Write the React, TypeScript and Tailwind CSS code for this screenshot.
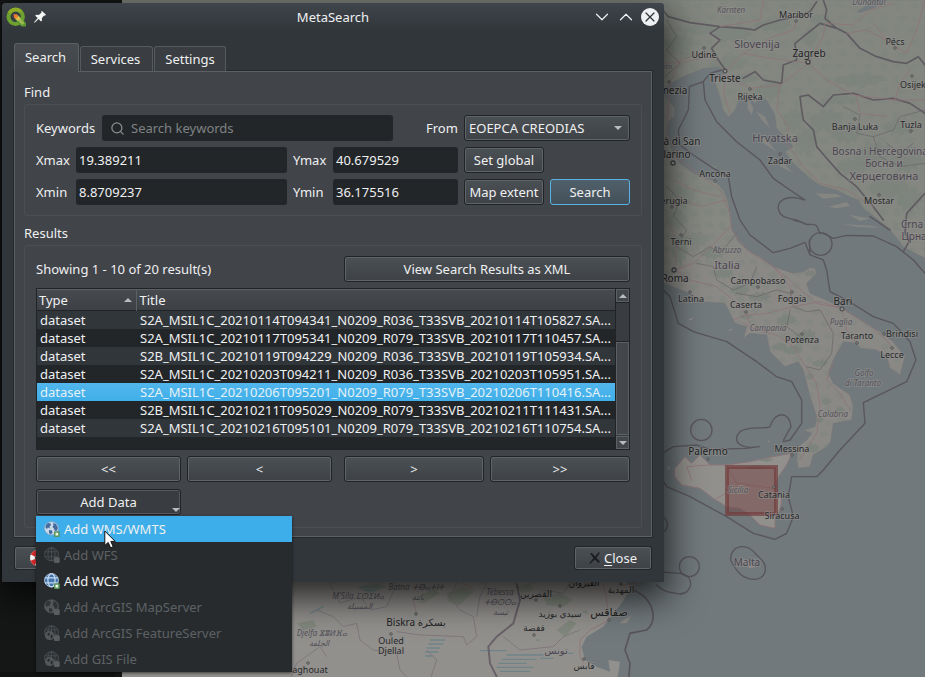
import React from "react";
import { ChevronDown, ChevronUp, Search, X } from "lucide-react";

const RAISED =
  "rounded-[3px] border border-[#202427] bg-linear-to-b from-[#4b5054] to-[#3e4246] text-[#eff0f1] shadow-[inset_0_0_0_1px_#5f6468]";
const FIELD =
  "h-[26px] w-full min-w-0 rounded-[3px] bg-[#232629] px-[3px] text-[#eff0f1] outline-none";

type Label = [string, number, number, number, ("region" | "country" | "city" | "big")?];

/* text, centre x, baseline y, size, kind */
const LABELS: Label[] = [
  ["Kärnten", 731, 13, 8, "region"],
  ["Dunántúl", 869, 5, 8, "region"],
  ["Maribor", 796, 18, 9, "city"],
  ["Slovenija", 757, 48, 11, "country"],
  ["Zagreb", 809, 57, 10, "big"],
  ["Pécs", 895, 45, 9, "city"],
  ["Udine", 704, 58, 9, "city"],
  ["eto", 667, 69, 7, "region"],
  ["Trieste", 725, 82, 10, "big"],
  ["Osijek", 913, 88, 9, "city"],
  ["nezia", 675, 94, 10, "big"],
  ["Rijeka", 750, 100, 9, "city"],
  ["Banja Luka", 855, 130, 9, "city"],
  ["Tuzla", 911, 128, 9, "city"],
  ["à di San", 682, 145, 10, "big"],
  ["larino", 677, 158, 10, "big"],
  ["Hrvatska", 775, 142, 11, "country"],
  ["Zadar", 780, 164, 9, "city"],
  ["Bosna i Hercegovina", 880, 155, 10, "country"],
  ["Босна и", 884, 167, 10, "country"],
  ["Херцеговина", 884, 180, 11, "country"],
  ["Ancona", 715, 177, 9, "city"],
  ["Mostar", 879, 204, 9, "city"],
  ["erugia", 674, 204, 9, "city"],
  ["Crna", 912, 228, 10, "country"],
  ["Црна", 914, 240, 10, "country"],
  ["Terni", 681, 245, 9, "city"],
  ["Abruzzo", 727, 253, 8, "region"],
  ["Italia", 727, 269, 11, "country"],
  ["Roma", 675, 282, 10, "big"],
  ["Campobasso", 758, 284, 9, "city"],
  ["Latina", 691, 302, 9, "city"],
  ["Foggia", 792, 302, 9, "city"],
  ["Bari", 843, 305, 10, "big"],
  ["Caserta", 746, 308, 9, "city"],
  ["Puglia", 841, 325, 8, "region"],
  ["Campania", 768, 331, 8, "region"],
  ["Potenza", 802, 343, 9, "city"],
  ["Taranto", 857, 339, 9, "city"],
  ["Brindisi", 902, 337, 9, "city"],
  ["Lecce", 892, 358, 9, "city"],
  ["Golfo", 864, 376, 8, "region"],
  ["di Taranto", 863, 386, 8, "region"],
  ["Calabria", 833, 417, 8, "region"],
  ["Messina", 792, 452, 9, "city"],
  ["Palermo", 708, 455, 10, "big"],
  ["Sicilia", 738, 493, 8, "region"],
  ["Catania", 774, 498, 9, "city"],
  ["Siracusa", 782, 519, 9, "city"],
  ["Malta", 747, 566, 10, "country"],
  ["M'Sila ⵎⵙⵉⵍⴰ", 358, 599, 8, "region"],
  ["المسيلة", 359, 609, 8, "region"],
  ["Batna ⵜⴱⴰⵜⵏⵜ", 416, 590, 8, "region"],
  ["باتنة", 418, 600, 8, "region"],
  ["Tébessa", 500, 595, 8, "region"],
  ["ⵜⴱⵙⵙⴰ", 500, 605, 8, "region"],
  ["تبسة", 500, 615, 8, "region"],
  ["القصرين", 536, 597, 9, "city"],
  ["القيروان", 584, 586, 9, "city"],
  ["المهدية", 621, 593, 9, "city"],
  ["سيدي بوزيد", 560, 617, 9, "city"],
  ["صفاقس", 609, 616, 11, "big"],
  ["قفصة", 534, 631, 9, "city"],
  ["تونس", 556, 654, 10, "country"],
  ["قابس", 584, 669, 9, "city"],
  ["Biskra بسكرة", 416, 626, 10, "big"],
  ["Ouled", 391, 644, 9, "city"],
  ["Djellal", 391, 654, 9, "city"],
  ["Djelfa ⴵⴻⵍⴼⴰ", 322, 636, 8, "region"],
  ["الجلفة", 319, 646, 8, "region"],
  ["aghouat", 310, 673, 9, "city"],
];

const FILLS = { region: "#55535b", country: "#4b4651", city: "#27292b", big: "#222426" };

const TOWNS: [number, number][] = [
  [796, 21], [895, 48], [704, 48], [669, 82], [750, 89], [855, 119], [911, 131],
  [780, 154], [715, 181], [879, 195], [672, 207], [681, 235], [758, 287], [690, 292],
  [792, 292], [746, 312], [802, 334], [857, 343], [884, 334], [892, 348], [792, 455],
  [708, 459], [774, 487], [782, 509], [416, 614], [391, 634], [560, 606], [609, 620],
  [534, 635], [584, 659], [536, 600], [621, 584], [308, 663], [912, 76],
];

const WOODS: [number, number, number, number][] = [
  [60, 130, 46, 34], [120, 90, 50, 18], [220, 100, 60, 30], [340, 75, 60, 20],
  [210, 190, 60, 24], [330, 270, 40, 34], [250, 235, 50, 16], [480, 60, 30, 20],
  [450, 110, 26, 30], [600, 240, 80, 26], [540, 300, 60, 16], [500, 360, 50, 40],
  [560, 400, 50, 34], [640, 460, 60, 40], [720, 380, 50, 30], [740, 480, 50, 46],
  [690, 560, 60, 50], [750, 600, 40, 40], [580, 500, 50, 30], [440, 420, 36, 50],
  [400, 360, 30, 40], [70, 590, 40, 40], [50, 660, 34, 30], [110, 720, 40, 30],
  [160, 760, 40, 20], [60, 750, 26, 50], [190, 820, 30, 18], [240, 870, 30, 20],
  [300, 890, 34, 16], [450, 820, 18, 12], [380, 960, 30, 20], [440, 1010, 30, 26],
  [400, 1050, 30, 16], [360, 1040, 22, 14], [450, 1130, 12, 12], [500, 1205, 16, 12],
  [540, 1230, 12, 10], [480, 1260, 12, 10], [460, 1345, 20, 16], [290, 1402, 34, 7],
  [320, 1380, 20, 6], [260, 950, 20, 10], [480, 1090, 24, 12], [160, 500, 16, 6],
];

const MAINLAND =
  "M-1620 0H795V775L760 757 730 740 708 710 690 690 650 655 610 625 596 600 570 590 530 570 480 555 450 535 400 490 375 455 400 440 385 420 350 385 345 345 320 300 300 290 285 310 262 280 250 300 240 290 225 330 205 350 190 330 180 290 165 245 185 225 200 215 175 200 130 205 80 225 40 245 15 265V290L45 325 25 370 20 400 35 450 60 490 100 520 165 545 190 570 205 610 215 685 235 725 270 755 300 770 340 800 400 820 430 815 450 803 465 805 470 820 440 850 450 880 500 900 545 925 600 960 660 995 700 1025 735 1070 720 1125 690 1105 680 1070 650 1050 600 1045 590 1030 550 1025 520 1080 505 1120 520 1150 570 1185 580 1220 575 1260 520 1270 512 1325 500 1340 460 1365 450 1400 415 1405 410 1380 415 1340 440 1320 455 1300 430 1290 465 1280 470 1250 450 1190 430 1110 415 1085 375 1100 330 1055 320 1005 270 1000 250 1015 260 980 225 970 215 950 195 910 130 905 90 880 50 865 12 850 0 840H-1620Z";

function MapCanvas() {
  return (
    <svg
      aria-label="Map of the central Mediterranean"
      className="absolute inset-0 h-full w-full"
      viewBox="0 0 925 677"
      preserveAspectRatio="xMaxYMin slice"
    >
      <defs>
        <pattern id="scrub" width="130" height="110" patternUnits="userSpaceOnUse">
          <path
            fill="#79827a"
            d="M5 12 20 6 34 14 28 24 12 22ZM50 4 70 10 64 20 78 26 60 34 48 22ZM96 14 120 8 126 24 110 30ZM14 44 30 38 40 50 30 62 12 56ZM60 50 84 44 96 56 80 68 66 62ZM108 50 124 56 118 70 104 64ZM2 84 22 76 34 88 20 100ZM48 82 60 74 72 84 66 98 52 96ZM88 86 112 80 120 94 98 104Z"
          />
        </pattern>
        <linearGradient id="highland" x1="0" y1="0" x2="0" y2="1">
          <stop offset="0" stopColor="#7d857b" stopOpacity=".55" />
          <stop offset=".45" stopColor="#7d857b" stopOpacity=".45" />
          <stop offset=".6" stopColor="#7d857b" stopOpacity="0" />
        </linearGradient>
      </defs>
      <rect width="925" height="677" fill="#71797c" />
      <g transform="translate(660 0) scale(0.33333)" strokeLinejoin="round" strokeLinecap="round">
        <path d={MAINLAND} fill="#8b8986" stroke="#777577" strokeWidth="2" />
        <path d={MAINLAND} fill="url(#highland)" />
        <path d={MAINLAND} fill="url(#scrub)" opacity=".35" />
        <path d="M45 1405 75 1370 95 1390 120 1365 150 1395 200 1395 270 1385 340 1370 395 1360 380 1395 355 1430 345 1465 365 1500 360 1530 345 1550V1585L300 1575 270 1545 240 1525 200 1520 160 1495 120 1465 65 1455 45 1430Z" fill="#92908c" stroke="#8d7579" strokeWidth="3" />
        <g fill="#78817a">
          {WOODS.map(([x, y, rx, ry], i) => (
            <path
              key={i}
              opacity={i < 24 ? 0.5 : 0.75}
              transform={`translate(${x} ${y}) scale(${rx} ${ry})`}
              d="M-1-.1-.7-.5-.5-.4-.3-.9 0-.6.3-1 .5-.5.9-.6.8-.2 1 .1.6.3.7.7.3.5.1 1-.2.6-.5.9-.6.4-.9.5Z"
            />
          ))}
        </g>
        <g fill="#71797c">
          <path d="M590 35 620 15 650 0H685L640 25 600 38Z" />
          <path d="M250 290 270 330 300 385 345 425 380 470 330 430 290 400 262 350Z" />
        </g>
        <g fill="#858682">
          <path d="M265 295 280 325 275 345 262 325ZM290 335 315 350 330 385 305 360ZM285 400 320 420 350 455 310 430ZM345 470 375 495 400 520 360 498ZM465 580 530 582 545 590 490 596ZM505 620 560 606 570 618 530 625ZM570 645 630 655 600 664ZM550 672 640 678 655 684 590 680Z" />
          <path d="M15 318 45 325 42 350 20 365Z" />
        </g>
        <g fill="none" stroke="#5f5b61" strokeWidth="5">
          <path d="M0 20 25 50 90 68 180 80 250 85 285 90 310 75 360 60 410 50 450 35 470 5M490 0 500 30 495 55 530 85 560 100 600 145 650 170 700 185 740 190 775 170 795 195M180 80 150 100 180 120 155 145 175 180 200 215M250 235 285 215 310 240 365 250 370 195 410 180 405 130 430 110 480 70 530 85M425 330 420 290 445 285 490 320 520 285 580 280 640 300 700 295 750 310 795 340M425 330 430 360 460 390 470 440 500 475 540 520 590 560 640 620 670 660M795 580 740 640 735 700 750 720 730 755M630 650 690 690" />
        </g>
        <g fill="none" stroke="#6e6a6d" strokeWidth="2.5">
          <path d="M20 60 50 110 20 150 60 190 15 230M550 320 600 345 590 400 640 410 700 390 720 350 795 330M640 410 660 470 720 500 795 490M680 430 720 460 760 430M20 560 60 600 40 650 80 690 50 740 100 770 150 740 180 760 230 700M110 790 160 800 170 840 220 870 270 850 290 800M230 880 290 890 350 870 390 880 400 920 440 935 480 930 520 1000 515 1060 480 1110 440 1100M390 930 380 980 420 1010" />
        </g>
        <g fill="none" stroke="#8e7377" strokeWidth="2.5">
          <path d="M10 190 80 185 150 170 195 215 250 160 330 175 410 185 445 190 490 110 495 70 580 75 630 30 700 10M180 80 240 70 300 60 310 0M445 190 500 240 580 285 700 300 795 300M445 190 400 225 360 255 270 265 195 225M360 255 350 330 385 380 380 430 430 500 480 550 560 570 640 620M250 160 340 110 400 90 410 60M590 290 600 340 680 350M705 300 720 250 750 210M640 70 690 130 740 160 770 90 795 0M170 170 130 160 60 180 30 250 20 400 60 480 140 540 180 570 210 640 215 690 260 750 340 800 400 850 470 910 545 925 620 970 680 1020 700 1050M40 540 100 570 180 590M50 590 120 620 200 600M45 810 100 790 150 745 210 680M45 810 90 840 170 860 220 900 260 945 320 940 400 920 480 905 545 925M45 810 50 720 20 660M340 800 390 860 395 890M250 970 290 990 350 1005 400 1040 430 1090 470 1150 480 1220 470 1300 420 1380M545 925 560 990 590 1030M520 1090 500 1140 540 1180 570 1230M220 960 260 945 270 970M195 240 190 280 210 340M560 100 620 90 680 120M200 1395 230 1450 340 1465M150 1395 80 1400 95 1440M170 1495 220 1470" />
        </g>
        <g fill="none" stroke="#59565d" strokeWidth="4">
          <path d="M185 210 150 220 130 245 88 260 85 330 55 390 60 435 100 465 160 505 205 530 215 590 240 660 270 705 340 758 390 745 435 727 450 765 490 780 500 810 510 875 560 900 640 950 700 970 750 1025 768 1080 740 1145 610 1208 615 1270 540 1350 490 1410 470 1430 395 1430 385 1490 400 1550 380 1600 345 1618 280 1600 200 1550 90 1490 20 1460 0 1430M130 245 135 300 170 365 230 425 300 480 340 535 390 570 435 600C375 580 350 605 356 630 365 665 410 650 430 670 450 680 470 662 475 690M475 690 482 702M435 670 400 660M450 765 448 720M490 700 520 715 560 706 640 708 710 740 760 780 795 820M0 860 30 890 55 970 100 995 200 1025 290 1085 350 1130 395 1145 425 1200 425 1270 390 1320 370 1325M298 1340C235 1350 215 1320 240 1295 270 1275 310 1290 330 1280 345 1230 390 1235 393 1280L370 1322M0 1365 40 1340 110 1335 150 1348 260 1345 298 1340" />
          <circle cx="482" cy="732" r="34" />
          <circle cx="124" cy="1290" r="32" />
          <circle cx="88" cy="1700" r="30" />
          <path d="M-10 1715 60 1720C105 1725 100 1780 60 1782 20 1775 10 1775-10 1755M212 1680C210 1635 260 1625 290 1665 335 1700 315 1740 280 1738 245 1735 230 1715 212 1680ZM0 1545C30 1560 30 1590 0 1602" />
        </g>
        <g fill="#8d898a">
          <path d="M235 1675 255 1680 285 1702 270 1705Z" />
          <path d="M325 1320 330 1328 322 1326ZM20 1395 32 1405 25 1410ZM85 957 105 952 90 962ZM205 990 220 985 210 994Z" />
        </g>
      </g>

      <g transform="translate(330 450) scale(0.33333)">
        <path d="M-640 390H880L905 410 875 460 850 490 820 530 770 560 755 590 765 630 800 650 840 665 835 630 870 635 860 700H-640Z" fill="#92908d" />
        <path d="M880 510 905 495 890 520 868 520Z" fill="#8a8884" />
        <g fill="#7c8478" opacity=".8">
          <path d="M350 430 400 410 430 425 390 465 355 455ZM250 450 310 415 330 430 280 460ZM640 440 690 430 730 450 700 470 650 465ZM80 410 140 400 170 410 120 430ZM680 540 720 510 740 520 705 560ZM-100 520-50 510-40 530-80 540ZM560 410 600 400 610 420 575 430ZM755 485 770 480 775 495Z" />
        </g>
        <g fill="none" stroke="#6f8488" strokeWidth="4">
          <path d="M300 570H345M295 582H340M290 594H330M285 606H325M285 618H310M450 602H530M530 615H640M515 628H620M505 640H590M500 652H610M510 664H600M630 625H670M680 610H730M90 410H150M100 420H140M-60 490-20 470M620 570H628" />
        </g>
        <g fill="none" stroke="#7f777d" strokeWidth="3">
          <path d="M-40 480 10 500 40 530 80 520 90 570 130 600 200 610 210 660 240 690M0 400 30 460 90 440 120 480 170 470 200 400M200 545 270 555 400 560 410 585 440 560 430 500 390 480 360 440 380 400M290 600 320 630 300 690M520 560 570 600 670 590 700 560 750 540M560 430 600 450 640 420 700 430 720 400M-120 690-100 640-30 590-10 620M470 400 450 440 440 500" />
        </g>
        <path d="M560 400 570 450 550 520 500 560 475 590 480 640 510 700" fill="none" stroke="#696269" strokeWidth="6" />
        <g fill="none" stroke="#8e7377" strokeWidth="2.5">
          <path d="M820 400 830 450 838 510 780 540 750 570 750 620 762 640M245 440 260 490M400 400 430 420M930 400 880 405" />
        </g>
        <path d="M910 420C980 450 980 520 950 540L900 550 885 600 900 640 895 700" fill="none" stroke="#59565d" strokeWidth="5" />
      </g>

      <rect x="727" y="467" width="49" height="47" fill="#6f3638" fillOpacity=".42" stroke="#72393b" strokeOpacity=".68" strokeWidth="4" />
      <g fill="#908e8b" stroke="#3f4143">
        {TOWNS.map(([x, y], i) => (
          <circle key={i} cx={x} cy={y} r="1.3" strokeWidth=".7" />
        ))}
        {[[808, 62], [673, 163], [674, 270]].map(([x, y]) => (
          <circle key={x} cx={x} cy={y} r="2" strokeWidth="1.300" />
        ))}
        <circle cx="725" cy="71" r="2" strokeWidth="1" />
        <circle cx="842" cy="309" r="2" strokeWidth="1" />
      </g>
      <g textAnchor="middle" fontFamily="'Noto Sans','DejaVu Sans',sans-serif" paintOrder="stroke" stroke="#93918e" strokeOpacity=".55" strokeWidth="2" strokeLinejoin="round">
        {LABELS.map(([text, x, y, size, kind = "city"]) => (
          <text key={text + x} x={x} y={y} fontSize={size} fill={FILLS[kind]} fontStyle={kind === "region" ? "italic" : "normal"}>
            {text}
          </text>
        ))}
      </g>
      <path d="M-400 0H122V677H-400Z" fill="#151716" />
      <path d="M-400 672H115V677H-400Z" fill="#101212" />
    </svg>
  );
}

function QgisLogo() {
  return (
    <svg viewBox="0 0 20 20" className="size-5" aria-hidden="true">
      <circle cx="9.700" cy="9.700" r="7.200" fill="none" stroke="#6da12f" strokeWidth="4" />
      <path d="M3.500 6A7.200 7.200 0 0 1 15 4.800" fill="none" stroke="#8fae25" strokeWidth="3.500" />
      <path d="m10 9 3.500.5L20 16v3.500h-4.500L9.500 13Z" fill="#589632" />
      <path d="m10 9 2.500-.5 6 7.500-2 2L9.500 12Z" fill="#9db84e" />
      <path d="m8 8 2.500-.5 3.700 4-2 2L8.500 11Z" fill="#e9c04c" />
      <path d="m7.500 7.200 3.500.3 1.200 2-2.500 2.500-1.700-1.500Z" fill="#ee7d32" />
    </svg>
  );
}

function Pin() {
  return (
    <svg viewBox="0 0 12 12" className="size-3" aria-hidden="true" fill="#f4f5f5">
      <path d="m8 0 4 3.700-1.100 1-.8-.2-2.300 2.700.3 2.200-1.100 1L4.700 8 .6 11.800 0 11.200l3.700-4.100L1.200 4.800l1-1 2.500.2L7.400 1.700l-.3-.9Z" />
    </svg>
  );
}

type GlobeKind = "wms" | "wfs" | "wcs" | "map" | "feature";

function Globe({ kind, disabled }: { kind: GlobeKind; disabled?: boolean }) {
  const body = disabled ? (kind === "map" ? "#53575a" : "#2b2f32") : kind === "wms" ? "#c9d9ea" : "#4573ab";
  const line = disabled ? "#4d5255" : kind === "wms" ? "#8ba6c6" : "#c4daee";
  return (
    <svg viewBox="0 0 16 16" className="size-4 shrink-0" aria-hidden="true">
      <ellipse cx="7.500" cy="7.300" rx="7" ry="6.600" fill={body} stroke={line} strokeWidth=".8" />
      {kind === "wms" || kind === "map" ? (
        <g fill={disabled ? "#303437" : "#446a9e"}>
          <path d="M2 4 4 2 6.500 2.500 7 4 5.500 5.500 6 7.500 4 6.500 3 8 1.500 6.500Z" />
          <path d="m9 2 3 1 2 4-1.500 3-2-.5L10 7.500 8.500 6 9.500 4ZM5 9l3 .5.5 2L7 13.500l-2-1.500Z" />
        </g>
      ) : (
        <g fill="none" stroke={line} strokeWidth={disabled ? 0.8 : 1.2}>
          <ellipse cx="7.500" cy="7.300" rx="3.600" ry="6.600" />
          <path d="M1 4.800h13M1 9.800h13" />
          {disabled && <path d="M7.500 .7v13.200" />}
        </g>
      )}
      {kind === "feature" && (
        <>
          <circle cx="5.500" cy="10.500" r="4.600" fill="#53575a" />
          <path d="m3 9 2-1.500 1 1.500-1.500 2ZM7 9.500l2 1-1 3-1.500-1Z" fill="#272b2e" />
        </>
      )}
      <rect x="10" y="10.300" width="5.700" height="5.700" rx="1" fill={disabled ? "#595d60" : "#58945c"} />
      {!disabled && <rect x="11.500" y="11.800" width="2.700" height="2.700" fill="#eef6ea" />}
    </svg>
  );
}

function Triangle({ up, className = "" }: { up?: boolean; className?: string }) {
  return (
    <svg viewBox="0 0 8 4" aria-hidden="true" className={`h-1 w-2 fill-[#b9bcbd] ${className}`}>
      <path d={up ? "M0 4 4 0l4 4Z" : "M0 0h8L4 4Z"} />
    </svg>
  );
}

function Button({ children, className = "" }: { children: React.ReactNode; className?: string }) {
  return (
    <button type="button" className={`h-[26px] text-center whitespace-nowrap ${RAISED} ${className}`}>
      {children}
    </button>
  );
}

const EXTENT = [
  { id: "xmax", label: "Xmax", value: "19.389211" },
  { id: "ymax", label: "Ymax", value: "40.679529" },
  { id: "xmin", label: "Xmin", value: "8.8709237" },
  { id: "ymin", label: "Ymin", value: "36.175516" },
];

function ExtentField({ index }: { index: number }) {
  const { id, label, value } = EXTENT[index];
  return (
    <>
      <label htmlFor={id}>{label}</label>
      <input id={id} defaultValue={value} className={FIELD} />
    </>
  );
}

const ROWS = [
  "S2A_MSIL1C_20210114T094341_N0209_R036_T33SVB_20210114T105827.SA...",
  "S2A_MSIL1C_20210117T095341_N0209_R079_T33SVB_20210117T110457.SA...",
  "S2B_MSIL1C_20210119T094229_N0209_R036_T33SVB_20210119T105934.SA...",
  "S2A_MSIL1C_20210203T094211_N0209_R036_T33SVB_20210203T105951.SA...",
  "S2A_MSIL1C_20210206T095201_N0209_R079_T33SVB_20210206T110416.SA...",
  "S2B_MSIL1C_20210211T095029_N0209_R079_T33SVB_20210211T111431.SA...",
  "S2A_MSIL1C_20210216T095101_N0209_R079_T33SVB_20210216T110754.SA...",
];
const SELECTED = 4;

function ResultsTable() {
  return (
    <div className="flex h-[162px] border border-[#202427] bg-[#232629]">
      <div className="min-w-0 flex-1 overflow-hidden">
        <table className="w-full table-fixed border-collapse text-left">
          <colgroup>
            <col className="w-[99px]" />
            <col />
          </colgroup>
          <thead>
            <tr className="h-[22px] bg-linear-to-b from-[#474b50] to-[#3c4045] shadow-[inset_0_1px_0_#5b6064,inset_0_-1px_0_#202427]">
              <th className="border-r border-[#5b6064] px-0.5 font-normal">
                <span className="flex items-center justify-between">
                  Type
                  <Triangle up className="mr-0.5" />
                </span>
              </th>
              <th className="px-[3px] font-normal">Title</th>
            </tr>
          </thead>
          <tbody>
            {ROWS.map((title, i) => (
              <tr
                key={title}
                className={`h-[18px] leading-[18px] ${
                  i === SELECTED
                    ? "bg-linear-to-b from-[#51b6ec] to-[#40afe9] text-[#e3f1f8]"
                    : i % 2 === 0
                      ? "bg-[#31363b]"
                      : "bg-[#232629]"
                }`}
              >
                <td className="px-[3px] py-0">dataset</td>
                <td className="overflow-hidden py-0 pl-1 whitespace-nowrap">{title}</td>
              </tr>
            ))}
          </tbody>
        </table>
      </div>
      <div className="flex w-[14px] flex-col border-l border-[#202427] bg-[#393d41]" aria-hidden="true">
        <span className="flex h-[13px] items-center justify-center border border-[#5b6064] bg-[#43474b]">
          <Triangle up />
        </span>
        <span className="h-10 border-y border-[#202427]" />
        <span className="flex-1 border border-[#5b6064] bg-[#43474b]" />
        <span className="mt-px flex h-[13px] items-center justify-center border border-[#5b6064] bg-[#43474b]">
          <Triangle />
        </span>
      </div>
    </div>
  );
}

const MENU: { text: string; kind: GlobeKind; disabled?: boolean }[] = [
  { text: "Add WMS/WMTS", kind: "wms" },
  { text: "Add WFS", kind: "wfs", disabled: true },
  { text: "Add WCS", kind: "wcs" },
  { text: "Add ArcGIS MapServer", kind: "map", disabled: true },
  { text: "Add ArcGIS FeatureServer", kind: "feature", disabled: true },
  { text: "Add GIS File", kind: "feature", disabled: true },
];

function AddDataMenu() {
  return (
    <div role="menu" className="absolute top-[27px] left-0 z-10 w-64 bg-[#272b2e] shadow-[0_1px_3px_rgba(0,0,0,0.6)]">
      {MENU.map((item, i) => (
        <button
          key={item.text}
          type="button"
          role="menuitem"
          disabled={item.disabled}
          className={`flex h-[26px] w-full items-center gap-1 px-2 text-left ${
            i === 0 ? "bg-[#3daee9] text-[#eff0f1]" : item.disabled ? "text-[#5d6164]" : "text-[#eff0f1]"
          }`}
        >
          <Globe kind={item.kind} disabled={item.disabled} />
          {item.text}
        </button>
      ))}
      <svg viewBox="0 0 12 19" aria-hidden="true" className="absolute top-3.5 left-[68px] h-[19px] w-3">
        <path d="M.8 1v14.500l3.400-3.100 2.400 5.400 2.600-1.100-2.400-5.300h4.400Z" fill="#fff" stroke="#111" strokeWidth="1" />
      </svg>
    </div>
  );
}

function Lifebuoy() {
  return (
    <svg viewBox="0 0 16 16" className="size-4" aria-hidden="true">
      <circle cx="8" cy="8" r="5.500" fill="none" stroke="#f3f3f3" strokeWidth="5" />
      <circle cx="8" cy="8" r="5.500" fill="none" stroke="#d72c2c" strokeWidth="5" strokeDasharray="4.320 4.320" strokeDashoffset="-2" />
    </svg>
  );
}

export default function App() {
  return (
    <div className="relative min-h-screen overflow-hidden bg-[#151716] pt-[3px] pl-0.5 font-['Noto_Sans','Open_Sans',sans-serif] text-[13px] leading-[18px] text-[#eff0f1]">
      <MapCanvas />
      <section
        aria-label="MetaSearch"
        className="relative w-full max-w-[662px] rounded-t-[4px] bg-[#31363b] pb-3 shadow-[0_12px_36px_4px_rgba(0,0,0,0.75)]"
      >
        <header className="grid h-10 grid-cols-[1fr_auto_1fr] items-start rounded-t-[4px] bg-linear-to-b from-[#40454b] to-[#31363b] to-70% px-1 pt-[3px]">
          <div className="flex h-[22px] items-center gap-2">
            <QgisLogo />
            <Pin />
          </div>
          <h1 className="pt-0.5">MetaSearch</h1>
          <div className="flex h-[22px] items-center justify-end gap-0.5 pr-px">
            <button type="button" aria-label="Minimize">
              <ChevronDown className="size-[22px]" strokeWidth={1.3} />
            </button>
            <button type="button" aria-label="Maximize">
              <ChevronUp className="size-[22px]" strokeWidth={1.3} />
            </button>
            <button type="button" aria-label="Close window" className="ml-0.5 flex size-[18px] items-center justify-center rounded-full bg-[#eff0f1] text-[#31363b]">
              <X className="size-4" strokeWidth={1.8} />
            </button>
          </div>
        </header>

        <div className="px-3">
          <div role="tablist" className="relative flex items-end gap-px">
            <button role="tab" aria-selected="true" type="button" className="-mb-px h-[29px] w-[65px] rounded-t-[3px] border border-b-0 border-[#5b6064] bg-linear-to-b from-[#484c50] to-[#414449] pr-0.5 pb-0.5">
              Search
            </button>
            <button role="tab" type="button" className="h-[25px] w-[73px] rounded-t-[3px] border border-b-0 border-[#565a5e] bg-[#3a3e42] pr-0.5">
              Services
            </button>
            <button role="tab" type="button" className="h-[25px] w-[72px] rounded-t-[3px] border border-b-0 border-[#565a5e] bg-[#3a3e42]">
              Settings
            </button>
          </div>

          <div className="border border-[#5b6064] bg-[#414449] px-[9px] pt-[11px] pb-2 shadow-[0_0_0_1px_#25292c]">
            <h2>Find</h2>
            <div className="mt-[3px] flex flex-col gap-1.5 rounded-[3px] border border-[#4b4f53] px-[11px] py-2.5">
              <div className="flex items-center gap-1.5">
                <label htmlFor="keywords" className="w-[60px]">Keywords</label>
                <div className="flex h-[26px] min-w-0 flex-1 items-center gap-1.5 rounded-[3px] bg-[#232629] px-2">
                  <Search className="size-[15px] shrink-0 text-[#8c8f91]" strokeWidth={2} />
                  <input id="keywords" placeholder="Search keywords" className="min-w-0 flex-1 bg-transparent outline-none placeholder:text-[#7f8284]" />
                </div>
                <label htmlFor="from" className="ml-[27px] w-8">From</label>
                <span className="relative">
                  <select id="from" className={`h-[26px] w-[166px] appearance-none pl-1 ${RAISED}`}>
                    <option>EOEPCA CREODIAS</option>
                  </select>
                  <Triangle className="pointer-events-none absolute top-[11px] right-2" />
                </span>
              </div>
              <div className="grid grid-cols-[34px_1fr_34px_125px_80px_80px] items-center gap-1.5">
                <ExtentField index={0} />
                <ExtentField index={1} />
                <Button>Set global</Button>
                <span />
                <ExtentField index={2} />
                <ExtentField index={3} />
                <Button>Map extent</Button>
                <button type="button" className="h-[26px] rounded-[3px] border border-[#56b2e4] bg-linear-to-b from-[#50606a] to-[#435059]">
                  Search
                </button>
              </div>
            </div>

            <h2 className="mt-2">Results</h2>
            <div className="mt-[3px] rounded-[3px] border border-[#4b4f53] px-[11px] pt-2.5 pb-3">
              <div className="flex items-center gap-3">
                <p className="flex-1">Showing 1 - 10 of 20 result(s)</p>
                <Button className="w-[286px]">View Search Results as XML</Button>
              </div>
              <div className="mt-1.5">
                <ResultsTable />
              </div>
              <div className="mt-1.5 flex gap-3">
                <div className="grid flex-1 grid-cols-2 gap-1.5">
                  <Button>&lt;&lt;</Button>
                  <Button>&lt;</Button>
                </div>
                <div className="grid w-[286px] grid-cols-2 gap-1.5">
                  <Button>&gt;</Button>
                  <Button>&gt;&gt;</Button>
                </div>
              </div>
              <div className="relative mt-[7px] w-[145px]">
                <button type="button" aria-haspopup="menu" aria-expanded="true" className="h-[26px] w-full rounded-[3px] border border-[#202427] bg-[#393c40] shadow-[inset_0_0_0_1px_#55595d]">
                  Add Data
                </button>
                <Triangle className="absolute right-px bottom-[3px]" />
                <AddDataMenu />
              </div>
            </div>
          </div>

          <footer className="mt-[9px] flex justify-between">
            <button type="button" aria-label="Help" className={`flex h-6 w-[78px] items-center pl-[15px] ${RAISED}`}>
              <Lifebuoy />
            </button>
            <button type="button" className={`flex h-6 w-[78px] items-center justify-center gap-[3px] ${RAISED}`}>
              <svg viewBox="0 0 12 12" className="size-3" aria-hidden="true">
                <path d="M1 1.500 3 1l3 3.500L9.500.5l1.500.2-3.700 5 3.700 4-1.500 1.300L5.800 7.500 1.500 11.500 0 11.500 4.500 6Z" fill="#1b1d1f" />
              </svg>
              <span>
                <u className="underline-offset-2">C</u>lose
              </span>
            </button>
          </footer>
        </div>
      </section>
    </div>
  );
}
